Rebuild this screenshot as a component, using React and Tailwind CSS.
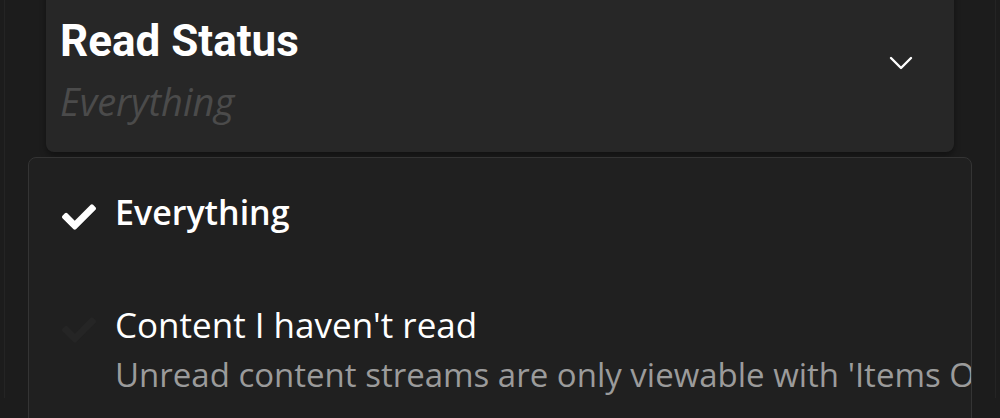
import React, { useState } from 'react';
import { FaCheck } from 'react-icons/fa';

const options = [
  { id: 'all', label: 'Everything' },
  {
    id: 'unread',
    label: "Content I haven't read",
    hint: "Unread content streams are only viewable with 'Items Of Interest' enabled",
  },
];

const App = () => {
  const [selected, setSelected] = useState('all');
  const current = options.find(o => o.id === selected);

  return (
    <div className="h-[418px] w-full overflow-hidden bg-[#1c1c1c]">
      <div className="mx-[4px] h-full border-x border-[#242424]">
        {/* Select field */}
        <div className="mx-[41px] -mt-[20px] flex h-[172px] items-start justify-between rounded-lg bg-[#272727] pt-[35px] pl-[14px] pr-[41px] shadow-[0_4px_6px_rgba(0,0,0,0.35)]">
          <div className="flex flex-col">
            <span className="font-['Roboto'] text-[44px] leading-[52px] font-bold text-white">Read Status</span>
            <span className="mt-[11px] font-['Open_Sans'] text-[38px] leading-[46px] italic text-[#4b4b4b]">
              {current.label}
            </span>
          </div>
          <svg className="mt-[40px]" width="24" height="16" viewBox="0 0 24 16" fill="none">
            <path d="M2 3l10 10L22 3" stroke="#ffffff" strokeWidth="2.4" strokeLinecap="round" strokeLinejoin="round" />
          </svg>
        </div>

        {/* Dropdown menu */}
        <div className="mt-[5px] mr-[23px] ml-[23px] h-[300px] overflow-hidden rounded-lg border border-[#343434] bg-[#202020]">
          {options.map(opt => (
            <button
              key={opt.id}
              onClick={() => setSelected(opt.id)}
              className="flex w-full items-start text-left"
            >
              <div className={opt.id === 'all' ? 'flex w-full items-start pt-[30px] pb-[50px]' : 'flex w-full items-start pt-[15px]'}>
                <span className={selected === opt.id ? 'ml-[33px] mt-[12px] block w-[53px] shrink-0 text-white' : 'ml-[33px] mt-[12px] block w-[53px] shrink-0 text-[#252525]'}>
                  <FaCheck size={34} />
                </span>
                <div className="flex min-w-0 flex-col whitespace-nowrap font-['Open_Sans']">
                  <span className={opt.id === 'all' ? 'text-[34px] leading-[48px] font-semibold text-white' : 'text-[35px] leading-[48px] text-white'}>
                    {opt.label}
                  </span>
                  {opt.hint && (
                    <span className="mt-[6px] text-[33px] leading-[40px] text-[#9b9b9b]">{opt.hint}</span>
                  )}
                </div>
              </div>
            </button>
          ))}
        </div>
      </div>
    </div>
  );
};

export default App;
